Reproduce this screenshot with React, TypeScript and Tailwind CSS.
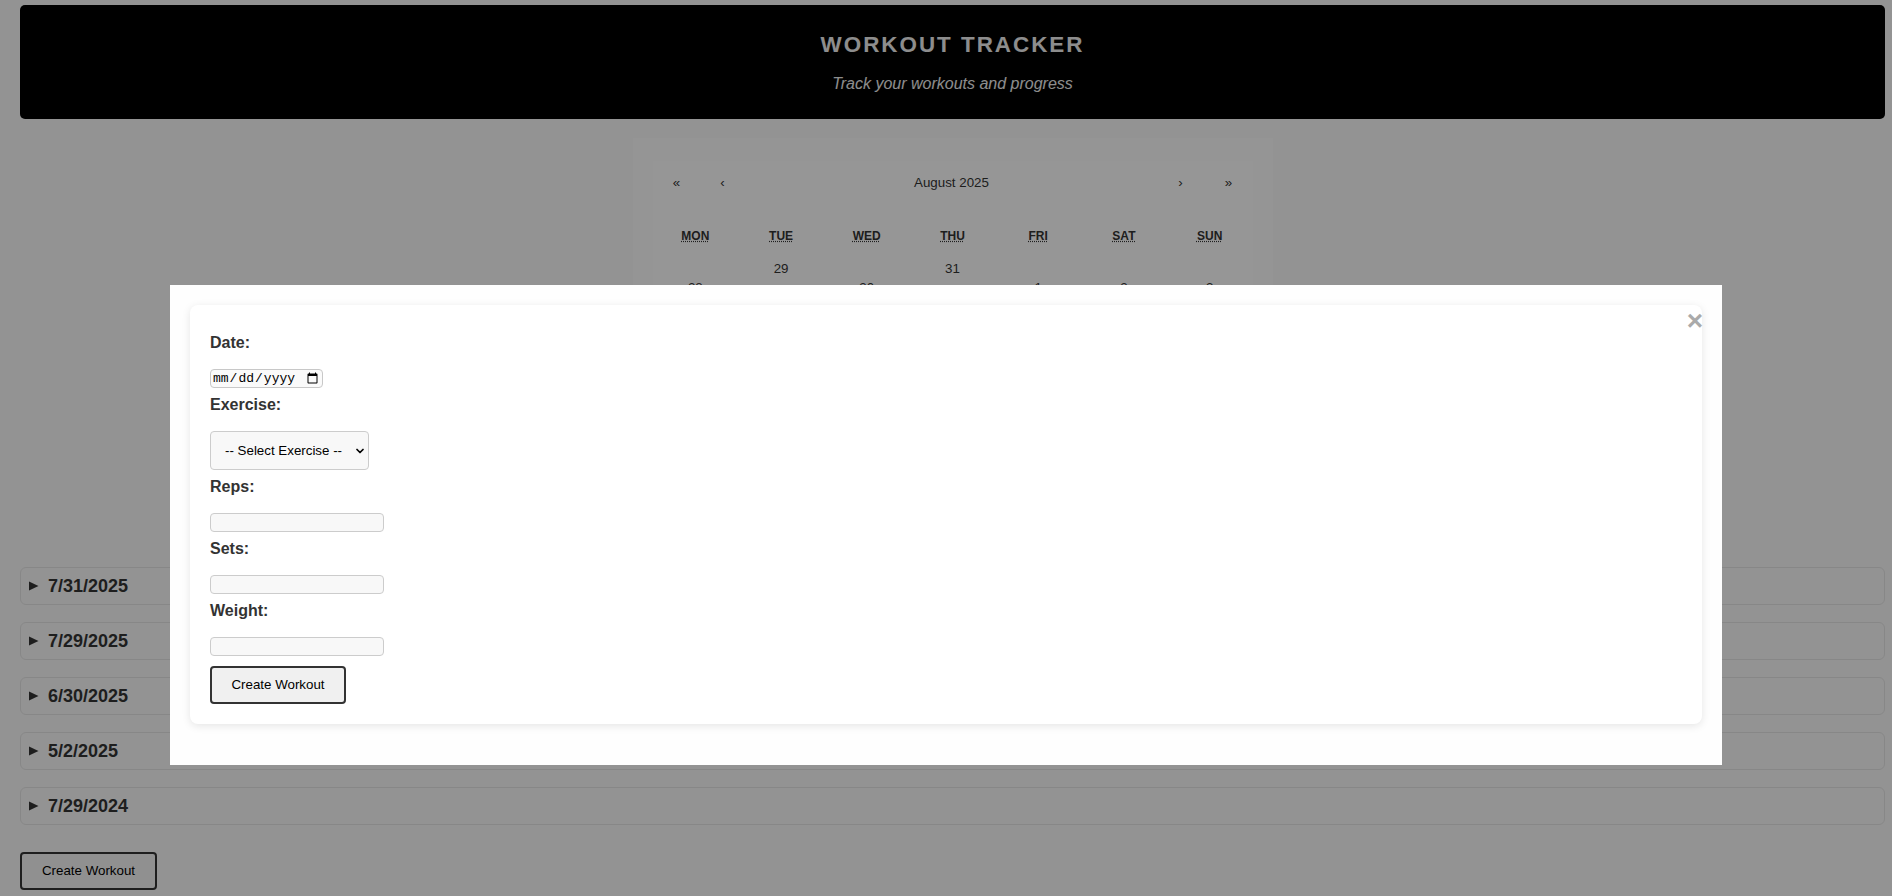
import { ChevronDown } from "lucide-react";

const workouts = ["7/31/2025", "7/29/2025", "6/30/2025", "5/2/2025", "7/29/2024"];
const weekdays = ["MON", "TUE", "WED", "THU", "FRI", "SAT", "SUN"];
const weeks = [
  [28, 29, 30, 31, 1, 2, 3],
  [4, 5, 6, 7, 8, 9, 10],
  [11, 12, 13, 14, 15, 16, 17],
  [18, 19, 20, 21, 22, 23, 24],
  [25, 26, 27, 28, 29, 30, 31],
];

function Calendar() {
  return (
    <div className="mx-auto mt-[19px] h-[409px] w-[640px] overflow-hidden bg-[#f8f8f8] p-5">
      <div className="mt-[3px] w-[600px] bg-[#fbfbfb] text-[#333]">
        {/* navigation */}
        <div className="mb-4 flex h-[44px] items-center text-[13.33px]">
          <button className="ml-[2px] h-[44px] w-[44px]">«</button>
          <button className="ml-[2px] h-[44px] w-[44px]">‹</button>
          <span className="flex-1 text-center">August 2025</span>
          <button className="mr-[4px] h-[44px] w-[44px]">›</button>
          <button className="mr-[2px] h-[44px] w-[44px]">»</button>
        </div>
        <div className="grid grid-cols-7 py-2 text-center text-[12px] leading-[14px] font-bold">
          {weekdays.map((d) => (
            <span key={d}>
              <abbr className="underline decoration-dotted" title={d}>
                {d}
              </abbr>
            </span>
          ))}
        </div>
        {weeks.map((week, wi) => (
          <div key={wi} className="grid grid-cols-7">
            {week.map((day, di) => {
              const marked = wi === 0 && (day === 29 || day === 31);
              return (
                <button
                  key={di}
                  className={`flex flex-col items-center py-[10px] text-[13.33px] leading-[15px] ${
                    marked ? "justify-start" : "justify-center"
                  }`}
                >
                  <span>{day}</span>
                  {marked && (
                    <span className="flex h-[38px] items-center">
                      <span className="h-[6px] w-[6px] rounded-full bg-[#333]" />
                    </span>
                  )}
                </button>
              );
            })}
          </div>
        ))}
      </div>
    </div>
  );
}

function Field({ label, first, children }: { label: string; first?: boolean; children: React.ReactNode }) {
  return (
    <>
      <label
        className={`${first ? "mt-[9px]" : "mt-2"} mb-[17px] block text-[16px] leading-[18px] font-bold text-[#333]`}
      >
        {label}
      </label>
      {children}
    </>
  );
}

function WorkoutForm() {
  const textInput = "block h-[19px] w-[174px] rounded border border-[#ccc] bg-[#f8f8f8] px-0.5 text-[13.33px]";
  return (
    <div className="rounded-lg bg-white p-5 shadow-[0_2px_8px_rgba(0,0,0,0.1)]">
      <Field label="Date:" first>
        <input
          type="date"
          className="block h-[19px] w-[113px] rounded border border-[#c8c8c8] bg-[#fafafa] px-px py-0 font-['Liberation_Mono',monospace] text-[13px] leading-[15px] text-black"
        />
      </Field>
      <Field label="Exercise:">
        <div className="relative w-[159px]">
          <select className="block h-[39px] w-full appearance-none rounded border border-[#ccc] bg-[#f8f8f8] pl-[14px] text-[13.33px] text-black">
            <option>-- Select Exercise --</option>
            <option>Bench Press</option>
            <option>Squat</option>
            <option>Deadlift</option>
          </select>
          <ChevronDown
            className="pointer-events-none absolute top-1/2 right-[3px] -translate-y-1/2"
            size={12}
            strokeWidth={3.5}
          />
        </div>
      </Field>
      <Field label="Reps:">
        <input type="number" className={textInput} />
      </Field>
      <Field label="Sets:">
        <input type="number" className={textInput} />
      </Field>
      <Field label="Weight:">
        <input type="number" className={textInput} />
      </Field>
      <button className="mt-[10px] h-[38px] w-[136px] rounded border-2 border-[#333] bg-[#f0f0f0] text-[13.33px] text-black">
        Create Workout
      </button>
    </div>
  );
}

export default function App() {
  return (
    <div className="min-h-screen bg-[#f5f5f5] pt-[5px] pr-[7px] pl-5 font-['Liberation_Sans',Arial,sans-serif]">
      {/* Header */}
      <header className="flex h-[114px] flex-col items-center rounded-[5px] bg-black pt-[27px]">
        <h1 className="text-[22.4px] leading-[26px] font-bold tracking-[2px] text-[#ebebeb]">WORKOUT TRACKER</h1>
        <p className="mt-[17px] text-[16px] leading-[18px] text-[#ebebeb] italic">Track your workouts and progress</p>
      </header>

      <Calendar />

      {/* Workout list */}
      <div className="mt-5">
        {workouts.map((w) => (
          <details key={w} className="mb-[17px] rounded-md border border-[#e2e2e2]">
            <summary className="flex h-[36px] cursor-pointer list-none items-center px-2 text-[18px] font-bold text-[#333]">
              <svg width="10" height="10" viewBox="0 0 10 10" className="shrink-0">
                <path d="M0 0.5 L9.5 5 L0 9.5 Z" fill="#333" />
              </svg>
              <span className="ml-[9px]">{w}</span>
            </summary>
          </details>
        ))}
        <button className="mt-[10px] h-[38px] w-[137px] rounded border-2 border-[#333] bg-[#f0f0f0] text-[13.33px] text-black">
          Create Workout
        </button>
      </div>

      {/* Modal */}
      <div className="fixed inset-0 flex items-start justify-center bg-black/40 pt-[285px]">
        <div className="w-[1552px] bg-[#fefefe] p-5 pb-[41px]">
          <span className="float-right -mr-px cursor-pointer text-[28px] leading-[32px] font-bold text-[#aaa]">×</span>
          <WorkoutForm />
        </div>
      </div>
    </div>
  );
}
